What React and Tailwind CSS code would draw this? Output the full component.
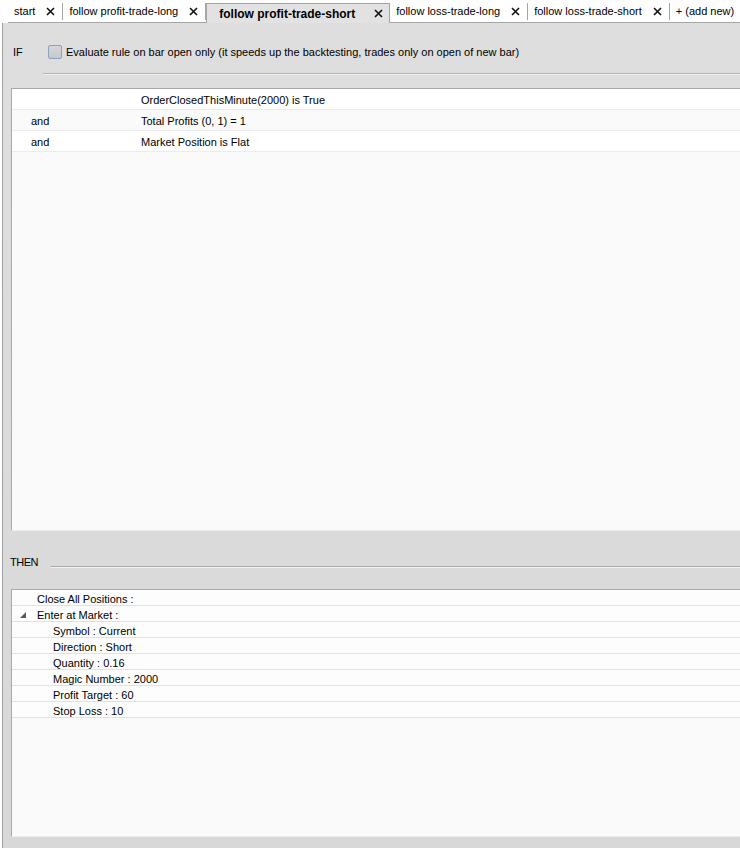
import React from 'react';

const Cross = () => (
    <svg width="9" height="9" viewBox="0 0 9 9" className="shrink-0">
        <path d="M1 1 L8 8 M8 1 L1 8" stroke="#111" strokeWidth="1.6" />
    </svg>
);

const tabs = [
    { label: 'start', close: true },
    { label: 'follow profit-trade-long', close: true },
    { label: 'follow profit-trade-short', close: true, active: true },
    { label: 'follow loss-trade-long', close: true },
    { label: 'follow loss-trade-short', close: true },
    { label: '+ (add new)', close: false },
];

const conditions = [
    { join: '', text: 'OrderClosedThisMinute(2000) is True' },
    { join: 'and', text: 'Total Profits (0, 1) = 1' },
    { join: 'and', text: 'Market Position is Flat' },
];

const actions = [
    { text: 'Close All Positions :', level: 0 },
    { text: 'Enter at Market :', level: 0, expanded: true },
    { text: 'Symbol : Current', level: 1 },
    { text: 'Direction : Short', level: 1 },
    { text: 'Quantity : 0.16', level: 1 },
    { text: 'Magic Number : 2000', level: 1 },
    { text: 'Profit Target : 60', level: 1 },
    { text: 'Stop Loss : 10', level: 1 },
];

const App = () => {
    return (
        <div className="w-[740px] h-[848px] flex flex-col overflow-hidden bg-white text-[11px] text-black font-['Liberation_Sans',Tahoma,sans-serif]">
            {/* Tab strip */}
            <div className="h-[23px] flex items-end pl-[8px] bg-white whitespace-nowrap">
                {tabs.map((t) =>
                    t.active ? (
                        <div
                            key={t.label}
                            className="shrink-0 h-[20px] flex items-center pl-[12px] pr-[6px] gap-[19px] bg-[#e2e2e2] border border-b-0 border-[#a5a5a5] font-bold text-[12px]"
                        >
                            <span>{t.label}</span>
                            <Cross />
                        </div>
                    ) : (
                        <div key={t.label} className="shrink-0 h-[23px] flex items-center border-b border-[#a5a5a5]">
                            <div className="flex items-center gap-[11px] pl-[6px] pr-[7px]">
                                <span>{t.label}</span>
                                {t.close && <Cross />}
                            </div>
                            <div className="w-px h-[17px] bg-[#a5a5a5]"></div>
                        </div>
                    )
                )}
                <div className="flex-1 h-[23px] border-b border-[#a5a5a5]"></div>
            </div>

            {/* Main panel */}
            <div className="flex-1 flex flex-col bg-[#dcdcdc] bg-gradient-to-b from-[#dedede] to-[#d8d8d8] border-l border-[#a0a0a0] ml-[2px]">
                {/* IF row */}
                <div className="mt-[22px] h-[14px] flex items-center">
                    <span className="ml-[10px] w-[35px]">IF</span>
                    <div className="w-[14px] h-[14px] rounded-[2px] border border-[#8ea2bb] bg-gradient-to-b from-[#d4d6d9] to-[#c6c8cb]"></div>
                    <span className="ml-[4px]">
                        Evaluate rule on bar open only (it speeds up the backtesting, trades only on open of new bar)
                    </span>
                </div>
                <div className="mt-[14px] ml-[40px] h-[2px] border-t border-[#b3b3b3] border-b border-b-[#f2f2f2]"></div>

                {/* Conditions list */}
                <div className="mt-[13px] ml-[8px] h-[443px] bg-[#fafafa] border-t border-l border-b border-[#a9a9a9] border-b-[#ececec]">
                    {conditions.map((c, i) => (
                        <div
                            key={i}
                            className={`h-[21px] flex items-center pt-[2px] border-b border-[#ececec] ${i % 2 === 0 ? 'bg-white' : 'bg-[#fafafa]'}`}
                        >
                            <span className="w-[129px] pl-[19px]">{c.join}</span>
                            <span>{c.text}</span>
                        </div>
                    ))}
                </div>

                {/* THEN row */}
                <div className="mt-[24px] h-[14px] flex">
                    <span className="ml-[7px] leading-[14px] tracking-[-0.5px]">THEN</span>
                    <div className="flex-1 ml-[13px] mt-[11px] h-[2px] border-t border-[#a9a9a9] border-b border-b-[#f2f2f2]"></div>
                </div>

                {/* Actions tree */}
                <div className="mt-[20px] ml-[8px] h-[248px] bg-[#fafafa] border-t border-l border-b border-[#a9a9a9] border-b-[#ececec]">
                    {actions.map((a, i) => (
                        <div key={i} className="h-[16px] flex items-center pt-[3px] bg-[#fdfdfd] border-b border-[#e2e2e2]">
                            <div className="w-[25px] flex items-center justify-center">
                                {a.expanded && (
                                    <svg width="6" height="6" viewBox="0 0 6 6" className="ml-[-3px] mt-[-1px]">
                                        <polygon points="6,0 6,6 0,6" fill="#5a5a5a" />
                                    </svg>
                                )}
                            </div>
                            <span className={a.level === 1 ? 'ml-[16px]' : ''}>{a.text}</span>
                        </div>
                    ))}
                </div>
            </div>
        </div>
    );
};

export default App;
